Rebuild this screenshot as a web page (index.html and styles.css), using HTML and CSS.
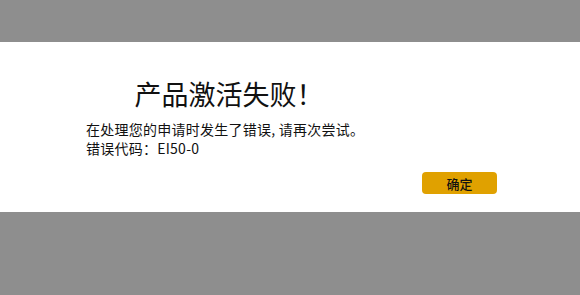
FILE: index.html
```html
<!DOCTYPE html>
<html lang="zh-CN">
<head>
    <meta charset="UTF-8">
    <title>产品激活失败</title>
    <link rel="stylesheet" href="styles.css">
</head>
<body>
    <div class="overlay">
        <div class="dialog">
            <h1 class="dialog-title">产品激活失败！</h1>
            <p class="dialog-text">在处理您的申请时发生了错误, 请再次尝试。<br>错误代码：EI50-0</p>
            <div class="dialog-actions">
                <button class="btn-ok">确定</button>
            </div>
        </div>
    </div>
</body>
</html>
```
FILE: styles.css
```css
body {
    margin: 0;
    font-family: "Noto Sans CJK SC", "Noto Sans", sans-serif;
    color: #111;
}
.overlay {
    width: 580px;
    height: 295px;
    background-color: #8e8e8e;
    padding-top: 42px;
    box-sizing: border-box;
}
.dialog {
    background-color: white;
    height: 170px;
    box-sizing: border-box;
    padding: 32px 83px 0 86px;
}
.dialog-title {
    width: 286px;
    margin: 0;
    font-size: 27px;
    font-weight: 400;
    text-align: center;
    line-height: 39px;
}
.dialog-text {
    margin: 7px 0 0;
    font-size: 14px;
    letter-spacing: 0.25px;
    line-height: 19px;
}
.dialog-actions {
    display: flex;
    justify-content: flex-end;
    margin-top: 14px;
}
.btn-ok {
    width: 75px;
    height: 22px;
    background-color: #e0a100;
    border: none;
    border-radius: 4px;
    font-family: inherit;
    font-size: 13px;
    font-weight: 500;
    color: #111;
    padding: 0;
}
```
